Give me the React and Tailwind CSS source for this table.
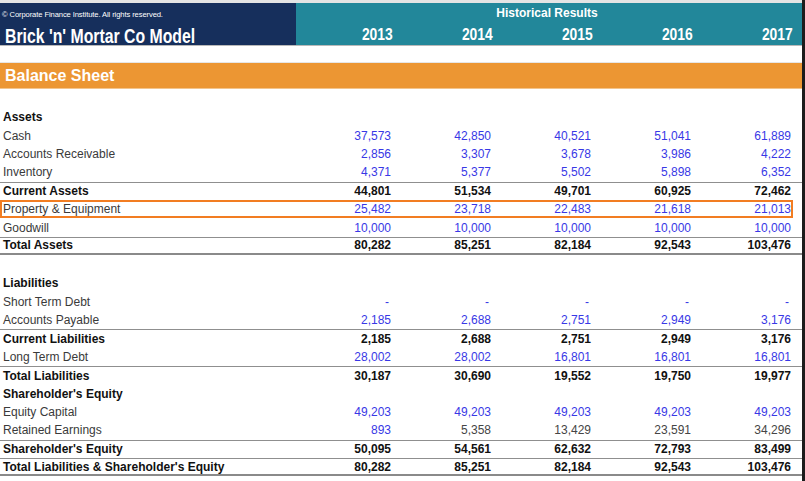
import React from "react";

const years = ["2013", "2014", "2015", "2016", "2017"];

const rows = [
  { type: "blank", h: "h-[19px]" },
  { label: "Assets", kind: "head" },
  { label: "Cash", vals: ["37,573", "42,850", "40,521", "51,041", "61,889"], kind: "in" },
  { label: "Accounts Receivable", vals: ["2,856", "3,307", "3,678", "3,986", "4,222"], kind: "in" },
  { label: "Inventory", vals: ["4,371", "5,377", "5,502", "5,898", "6,352"], kind: "in" },
  { label: "Current Assets", vals: ["44,801", "51,534", "49,701", "60,925", "72,462"], kind: "sub" },
  { label: "Property & Equipment", vals: ["25,482", "23,718", "22,483", "21,618", "21,013"], kind: "in", hl: true },
  { label: "Goodwill", vals: ["10,000", "10,000", "10,000", "10,000", "10,000"], kind: "in" },
  { label: "Total Assets", vals: ["80,282", "85,251", "82,184", "92,543", "103,476"], kind: "sub", bottom: true },
  { type: "blank", h: "h-[19px]" },
  { label: "Liabilities", kind: "head" },
  { label: "Short Term Debt", vals: ["-", "-", "-", "-", "-"], kind: "in", dash: true },
  { label: "Accounts Payable", vals: ["2,185", "2,688", "2,751", "2,949", "3,176"], kind: "in" },
  { label: "Current Liabilities", vals: ["2,185", "2,688", "2,751", "2,949", "3,176"], kind: "sub" },
  { label: "Long Term Debt", vals: ["28,002", "28,002", "16,801", "16,801", "16,801"], kind: "in" },
  { label: "Total Liabilities", vals: ["30,187", "30,690", "19,552", "19,750", "19,977"], kind: "sub" },
  { label: "Shareholder's Equity", kind: "head" },
  { label: "Equity Capital", vals: ["49,203", "49,203", "49,203", "49,203", "49,203"], kind: "in" },
  { label: "Retained Earnings", vals: ["893", "5,358", "13,429", "23,591", "34,296"], kind: "in", grayAfterFirst: true },
  { label: "Shareholder's Equity", vals: ["50,095", "54,561", "62,632", "72,793", "83,499"], kind: "sub" },
  { label: "Total Liabilities & Shareholder's Equity", vals: ["80,282", "85,251", "82,184", "92,543", "103,476"], kind: "sub", bottom: true },
];

function Row({ r }) {
  if (r.type === "blank") return <div className={r.h} />;
  const isSub = r.kind === "sub";
  const isHead = r.kind === "head";
  const border = isSub ? "border-t border-[#8f8f8f]" : "";
  const bottom = r.bottom ? "border-b-2 border-b-[#8a8a8a]" : "";
  return (
    <div className={`flex h-[18.4px] items-center ${border} ${bottom}`}>
      <div className={`flex w-[793px] h-full items-center ${r.hl ? "ring-2 ring-inset ring-[#f27d22]" : ""}`}>
        <div
          className={`w-[293px] pl-[3px] text-[12px] leading-none ${
            isSub || isHead ? "font-bold text-[#111]" : "text-[#3a3a3a]"
          }`}
        >
          {r.label}
        </div>
        {r.vals &&
          r.vals.map((v, i) => {
            let color = "text-[#3838e6]";
            if (isSub) color = "text-[#111] font-bold";
            if (r.grayAfterFirst && i > 0) color = "text-[#454545]";
            return (
              <div
                key={i}
                className={`w-[100px] text-right text-[12px] leading-none ${r.dash ? "pr-[4px]" : "pr-[2px]"} ${color}`}
              >
                {v}
              </div>
            );
          })}
      </div>
    </div>
  );
}

export default function App() {
  return (
    <div
      className="flex w-[805px] h-[481px] overflow-hidden bg-white"
      style={{ fontFamily: '"Liberation Sans", Arial, sans-serif' }}
    >
      <div className="flex-1 flex flex-col">
        <div className="h-[3px] bg-[#e4e4e4]" />
        <div className="flex h-[43px] border-b border-[#b9b9b9]">
          <div className="w-[296px] bg-[#162f5c] flex flex-col text-white">
            <div className="pl-[2px] pt-[8px] text-[7.6px] leading-none tracking-[-0.1px]">
              © Corporate Finance Institute. All rights reserved.
            </div>
            <div className="pl-[5px] pt-[7px] text-[20px] font-bold leading-none">
              <span className="inline-block origin-left scale-x-[0.79] whitespace-nowrap">Brick 'n' Mortar Co Model</span>
            </div>
          </div>
          <div className="flex-1 bg-[#22879a] flex flex-col text-white">
            <div className="h-[20px] flex items-center justify-center text-[12px] font-bold leading-none pr-[4px]">
              Historical Results
            </div>
            <div className="flex items-center h-[22px] text-[16.5px] font-bold leading-none">
              {years.map((y, i) => (
                <div key={y} className={`${i === 0 ? "w-[97px]" : "w-[100px]"} text-right`}>
                  <span className="inline-block origin-right scale-x-[0.84]">{y}</span>
                </div>
              ))}
            </div>
          </div>
        </div>
        <div className="h-[17px] border-b border-[#e6e6e6]" />
        <div className="h-[26px] bg-[#ec9633] flex items-center pl-[5px] text-white text-[16px] font-bold leading-none border-b border-[#f3c48c]">
          Balance Sheet
        </div>
        {rows.map((r, i) => (
          <Row key={i} r={r} />
        ))}
      </div>
      <div className="w-[3px] bg-[#1c1c1c]" />
    </div>
  );
}
